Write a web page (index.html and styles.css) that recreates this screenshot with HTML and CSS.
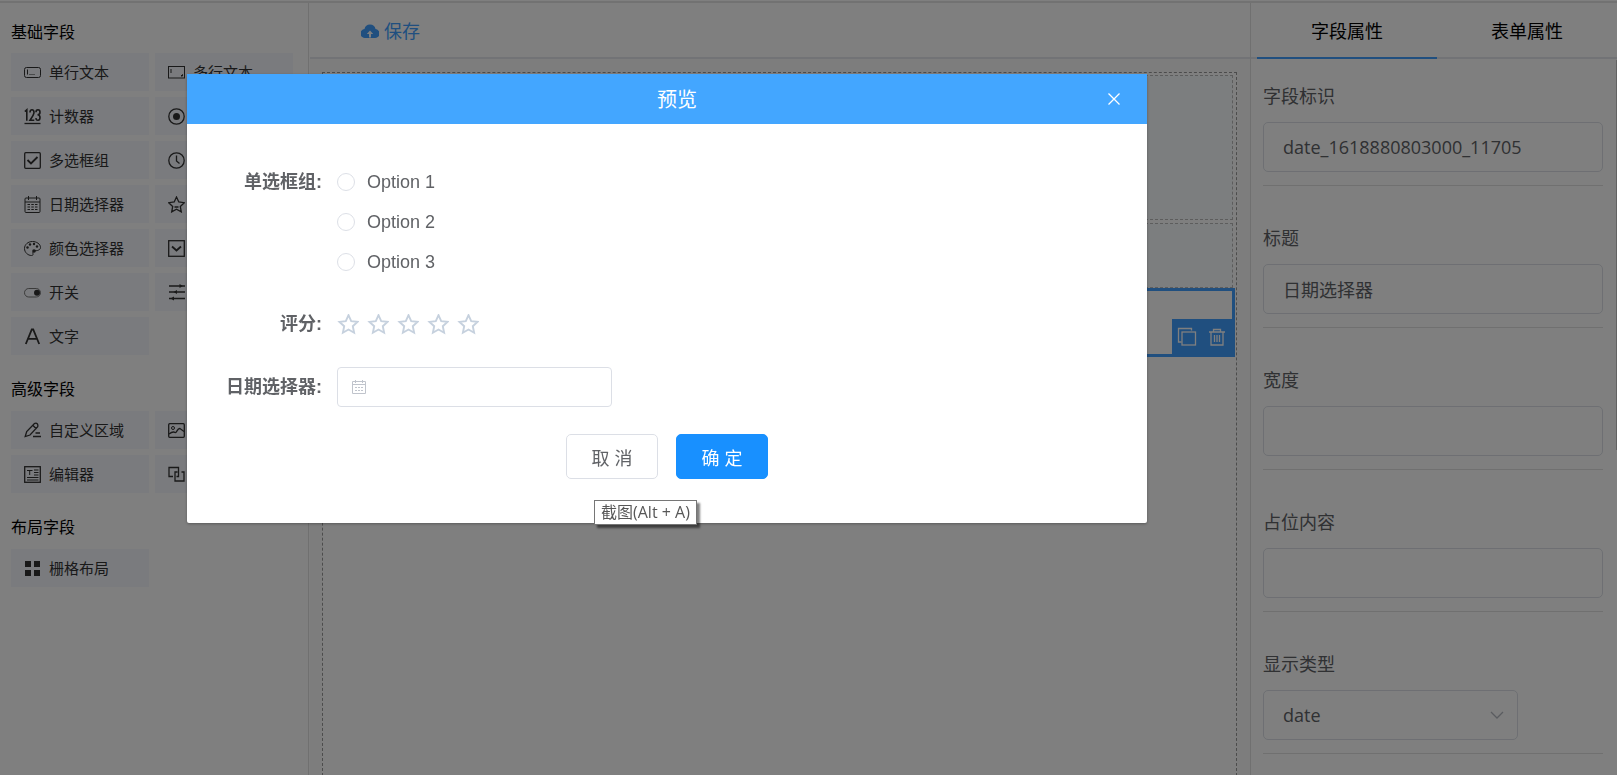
FILE: index.html
```html
<!DOCTYPE html>
<html lang="zh-CN">
<head>
<meta charset="utf-8">
<title>表单设计</title>
<link rel="stylesheet" href="styles.css">
</head>
<body>
<div class="app">
  <aside class="sidebar">
    <h2 class="group-title">基础字段</h2>
    <div class="fields">
      <button class="field"><svg class="icon" viewBox="0 0 17 17"><rect x=".5" y="3.5" width="16" height="10" rx="2"/><path d="M3.5 5.5v5M5.5 10.5h1M7.5 10.5h1M9.5 10.5h1"/></svg>单行文本</button>
      <button class="field"><svg class="icon" viewBox="0 0 17 17"><rect x=".5" y="2.500" width="16" height="11.500"/><path d="M3 5v4M13 12l1.500-1.500v1.500z"/></svg>多行文本</button>
      <button class="field"><svg class="icon" viewBox="0 0 17 17"><path class="digits" d="M.8 3.500L2.800 1.800v11M6 4.500Q6 1.800 8 1.800t2 2.700Q10 6.500 6 12.200h4.300M12 4.300q0-2.500 2-2.500t2 2.500-2.500 2.500q2.500 0 2.500 2.700T14 12.300t-2-2.300"/><path class="bold" d="M.5 15.500h16"/></svg>计数器</button>
      <button class="field"><svg class="icon" viewBox="0 0 17 17"><circle class="bold" cx="8.500" cy="8.500" r="7.700"/><circle class="solid" cx="8.500" cy="8.500" r="3.500"/></svg>单选框组</button>
      <button class="field"><svg class="icon" viewBox="0 0 17 17"><rect class="bold" x=".7" y=".7" width="15.600" height="15.600" rx="1"/><path class="heavy" d="M3.500 8l3.500 3.500L13.500 5"/></svg>多选框组</button>
      <button class="field"><svg class="icon" viewBox="0 0 17 17"><circle class="bold" cx="8.500" cy="8.500" r="7.700"/><path class="bold" d="M8.500 3.500v5.500l3 2.500"/></svg>时间选择器</button>
      <button class="field"><svg class="icon" viewBox="0 0 17 17"><rect x="1" y="2" width="15" height="14.500" rx="1"/><path d="M1 6h15M4.500 0v4M12.500 0v4M3.500 8.500h2.500M7.300 8.500h2.500M11 8.500h2.500M3.500 11h2.500M7.300 11h2.500M11 11h2.500M3.500 13.500h2.500M7.300 13.500h2.500M11 13.500h2.500"/></svg>日期选择器</button>
      <button class="field"><svg class="icon" viewBox="0 0 17 17"><path class="bold" d="M8.500 1l2.300 5 5.500.7-4 3.700 1 5.500-4.800-2.700-4.800 2.700 1-5.500-4-3.700 5.500-.7zM6.500 11h4"/></svg>评分</button>
      <button class="field"><svg class="icon" viewBox="0 0 17 17"><path d="M8.500 1.500C4 1.500.5 4.500.5 8.500s3.500 7 7 7c2.500 0 1-2 1.500-3.500.5-2 3-1 4.500-1.500s3-1.200 3-3c0-3.500-4-6-8-6z"/><circle class="solid" cx="3.500" cy="7.500" r="1.200"/><circle class="solid" cx="6" cy="4.500" r="1.200"/><circle class="solid" cx="10" cy="4" r="1.200"/><circle class="solid" cx="13" cy="6.500" r="1.200"/><circle class="solid" cx="10" cy="11" r="1.800"/></svg>颜色选择器</button>
      <button class="field"><svg class="icon" viewBox="0 0 17 17"><rect class="bold" x=".7" y=".7" width="15.600" height="15.600"/><path class="heavy" d="M4 6.500l4.500 4 4.500-4"/></svg>下拉选择框</button>
      <button class="field"><svg class="icon" viewBox="0 0 17 17"><rect class="thin" x=".5" y="4.500" width="16" height="8.500" rx="4.250"/><circle class="solid" cx="13" cy="8.700" r="3"/></svg>开关</button>
      <button class="field"><svg class="icon" viewBox="0 0 17 17"><path class="bold" d="M1 2h16M1 8h16M1 14.500h16"/><path class="solid" d="M11.500 0l3.500 2-3.500 2zM9 6v4L5.500 8zM6 12.500v4l-3.500-2z"/></svg>滑块</button>
      <button class="field"><svg class="icon" viewBox="0 0 17 17"><path class="heavy" d="M1.800 16L7.800 1.500h1.400L15.200 16M4 10.800h9"/></svg>文字</button>
    </div>
    <h2 class="group-title">高级字段</h2>
    <div class="fields">
      <button class="field"><svg class="icon" viewBox="0 0 17 17"><path class="bold" d="M1.200 14.500l1.500-5 7.500-7.800q2-1 3 0t.5 3L6 13zM9 3.500l3.500 3.500M11.500 11h4.500M9 14.500h8"/></svg>自定义区域</button>
      <button class="field"><svg class="icon" viewBox="0 0 17 17"><rect class="bold" x=".7" y="1.700" width="15.600" height="13.600" rx="1"/><circle cx="5" cy="6" r="1.500"/><path class="bold" d="M1 12q4-3 6-1.500c2 1 2-4.500 5-4l4 3"/></svg>图片</button>
      <button class="field"><svg class="icon" viewBox="0 0 17 17"><rect class="bold" x=".7" y=".7" width="15.600" height="15.600"/><path d="M3 4.500h5.500M5.700 4.500V9M10 4h4.500M10 6.500h4.500M10 9h4.500M3 11.500h11.500M3 14h11.500"/></svg>编辑器</button>
      <button class="field"><svg class="icon" viewBox="0 0 17 17"><path class="bold" d="M5 10.500H1v-9h9.500v9h-2M9.500 6H7v9h9V6h-2.500"/></svg>级联选择器</button>
    </div>
    <h2 class="group-title">布局字段</h2>
    <div class="fields">
      <button class="field"><svg class="icon" viewBox="0 0 17 17"><path class="solid" d="M1 1h6v6H1zM10 1h6v6h-6zM1 10h6v6H1zM10 10h6v6h-6z"/></svg>栅格布局</button>
    </div>
  </aside>

  <main class="main">
    <div class="toolbar">
      <button class="save"><svg class="cloud" viewBox="0 0 18 16"><path d="M4.500 15A4.500 4.500 0 0 1 3.500 6 5.600 5.600 0 0 1 14.500 6a4.500 4.500 0 0 1-1 9z"/><path class="arrow" d="M8 14.500V11H5.800L9 7.500 12.200 11H10v3.500z"/></svg>保存</button>
    </div>
    <div class="stage">
      <div class="canvas">
        <div class="widget widget-radio"></div>
        <div class="widget widget-rate"></div>
        <div class="widget-selected">
          <div class="actions">
            <button class="action" aria-label="复制"><svg viewBox="0 0 20 20"><path d="M4.500 15H1.500V1.500h13v2"/><rect x="5" y="5" width="13.500" height="13"/></svg></button>
            <button class="action" aria-label="删除"><svg viewBox="0 0 20 20"><path d="M2 5h16M6.500 5V2.500h7V5M4 5v13h12V5M7.500 8v7M10 8v7M12.500 8v7"/></svg></button>
          </div>
        </div>
      </div>
    </div>
  </main>

  <section class="config">
    <div class="tabs" role="tablist">
      <button class="tab tab-active" role="tab" aria-selected="true">字段属性</button>
      <button class="tab" role="tab" aria-selected="false">表单属性</button>
    </div>
    <form class="props">
      <div class="prop"><label class="prop-label" for="model">字段标识</label><input class="control" id="model" type="text" value="date_1618880803000_11705"></div>
      <div class="prop"><label class="prop-label" for="name">标题</label><input class="control" id="name" type="text" value="日期选择器"></div>
      <div class="prop"><label class="prop-label" for="width">宽度</label><input class="control" id="width" type="text"></div>
      <div class="prop"><label class="prop-label" for="placeholder">占位内容</label><input class="control" id="placeholder" type="text"></div>
      <div class="prop"><label class="prop-label" for="kind">显示类型</label>
        <div class="select-wrap"><select class="control" id="kind"><option>date</option></select><svg class="chevron" viewBox="0 0 14 8"><path d="M1 1l6 6 6-6"/></svg></div>
      </div>
    </form>
    <div class="scroll-thumb"></div>
  </section>
</div>

<div class="overlay">
  <div class="dialog" role="dialog" aria-labelledby="dialog-title">
    <header class="dialog-head">
      <h1 class="dialog-title" id="dialog-title">预览</h1>
      <button class="close" aria-label="关闭"><svg viewBox="0 0 12 12"><path d="M.5 .5l11 11M11.500 .5l-11 11"/></svg></button>
    </header>
    <form class="preview">
      <div class="row">
        <span class="row-label" id="radio-label">单选框组:</span>
        <div class="radios" role="radiogroup" aria-labelledby="radio-label">
          <label class="radio"><input type="radio" name="option">Option 1</label>
          <label class="radio"><input type="radio" name="option">Option 2</label>
          <label class="radio"><input type="radio" name="option">Option 3</label>
        </div>
      </div>
      <div class="row">
        <span class="row-label">评分:</span>
        <div class="stars">
          <button type="button" class="star" aria-label="1"><svg viewBox="0 0 22 22"><path d="M11.500 1.200l2.700 6 6.300.7-4.700 4.300 1.300 6.500-5.600-3.200-5.600 3.200 1.300-6.500-4.700-4.300 6.300-.7z"/></svg></button>
          <button type="button" class="star" aria-label="2"><svg viewBox="0 0 22 22"><path d="M11.500 1.200l2.700 6 6.300.7-4.700 4.300 1.300 6.500-5.600-3.200-5.600 3.200 1.300-6.500-4.700-4.300 6.300-.7z"/></svg></button>
          <button type="button" class="star" aria-label="3"><svg viewBox="0 0 22 22"><path d="M11.500 1.200l2.700 6 6.300.7-4.700 4.300 1.300 6.500-5.600-3.200-5.600 3.200 1.300-6.500-4.700-4.300 6.300-.7z"/></svg></button>
          <button type="button" class="star" aria-label="4"><svg viewBox="0 0 22 22"><path d="M11.500 1.200l2.700 6 6.300.7-4.700 4.300 1.300 6.500-5.600-3.200-5.600 3.200 1.300-6.500-4.700-4.300 6.300-.7z"/></svg></button>
          <button type="button" class="star" aria-label="5"><svg viewBox="0 0 22 22"><path d="M11.500 1.200l2.700 6 6.300.7-4.700 4.300 1.300 6.500-5.600-3.200-5.600 3.200 1.300-6.500-4.700-4.300 6.300-.7z"/></svg></button>
        </div>
      </div>
      <div class="row">
        <label class="row-label" for="date">日期选择器:</label>
        <div class="date"><svg viewBox="0 0 14 14"><path d="M.5 1.500h13v12H.5zM.5 4.500h13M3.500 0v3M10.500 0v3M3 7.500h2M6 7.500h2M9 7.500h2M3 10.500h2M6 10.500h2M9 10.500h2"/></svg><input id="date" type="text"></div>
      </div>
    </form>
    <footer class="dialog-foot">
      <button class="btn">取 消</button>
      <button class="btn btn-primary">确 定</button>
    </footer>
    <div class="tooltip" role="tooltip">截图(Alt + A)</div>
  </div>
</div>
</body>
</html>
```

FILE: styles.css
```css
* { box-sizing: border-box; }
body { margin: 0; font-family: "Open Sans", "Noto Sans CJK SC", sans-serif; color: #303133; background: #fff; overflow: hidden; }
button { margin: 0; padding: 0; border: 0; background: none; font: inherit; color: inherit; }
h1, h2 { margin: 0; font-weight: 400; }
svg { flex: none; fill: none; }

.app { display: flex; height: 100vh; margin-top: 1px; border-top: 2px solid #e4e4e4; }
.sidebar { width: 309px; flex: none; padding: 0 15px 0 11px; border-right: 1px solid #e0e0e0; }
.group-title { padding: 22px 0 10px; font-size: 16px; line-height: 24px; color: #000; }
.group-title:first-child { padding: 17px 0 9px; }
.fields { display: grid; grid-template-columns: 1fr 1fr; gap: 6px; }
.field { display: flex; align-items: center; gap: 8px; height: 38px; padding-left: 13px; background: #f4f6fc; font-size: 15px; line-height: 24px; color: #333; text-align: left; white-space: nowrap; }
.icon { width: 17px; height: 17px; stroke: #333; stroke-width: 1; }
.icon .thin { stroke: #777; }
.icon .bold { stroke-width: 1.3; }
.icon .digits { stroke-width: 1.6; }
.icon .heavy { stroke-width: 1.8; }
.icon .solid { fill: #333; stroke: none; }

.main { flex: 1; min-width: 0; display: flex; flex-direction: column; padding-left: 1px; }
.toolbar { display: flex; align-items: center; height: 56px; padding: 2px 0 0 51px; border-bottom: 2px solid #e4e7ed; }
.save { display: flex; align-items: center; gap: 5px; font-size: 18px; line-height: 26px; color: #409eff; }
.cloud { width: 18px; height: 16px; fill: #409eff; }
.cloud .arrow { fill: #fff; }
.stage { flex: 1; padding: 13px 13px 0 12px; background: #fafafa; }
.canvas { height: 100%; padding: 2px; border: 1px dashed #999; background: #fff; }
.widget { margin-right: 1px; border: 1px dashed #bbb; background: #f9fcff; }
.widget-radio { height: 145px; margin-bottom: 3px; }
.widget-rate { height: 65px; }
.widget-selected { display: flex; justify-content: flex-end; align-items: flex-end; height: 69px; border: 3px solid #409eff; margin-right: -1px; }
.actions { display: flex; align-items: center; justify-content: center; gap: 10px; width: 60px; height: 35px; background: #409eff; }
.action svg { display: block; width: 20px; height: 20px; stroke: #fff; stroke-width: 1.3; }

.config { position: relative; width: 367px; flex: none; border-left: 1px solid #e0e0e0; }
.tabs { display: flex; height: 56px; padding-left: 6px; border-bottom: 2px solid #e4e7ed; }
.tab { flex: 1; height: 56px; padding-top: 2px; font-size: 18px; line-height: 26px; color: #000; border-bottom: 2px solid transparent; }
.tab-active { border-bottom-color: #409eff; }
.scroll-thumb { position: absolute; top: 57px; right: 0; width: 1px; height: 390px; background: #c4c4c4; }
.props { display: flex; flex-direction: column; gap: 40px; padding: 25px 14px 0 12px; }
.prop { padding-bottom: 13px; border-bottom: 1px solid #e0e0e0; }
.prop-label { display: block; margin-bottom: 14px; font-size: 18px; line-height: 24px; color: #606266; }
.control { display: block; width: 100%; height: 50px; padding: 0 19px; border: 1px solid #dcdfe6; border-radius: 5px; background: #fff; font: inherit; font-size: 18px; color: #606266; appearance: none; }
.select-wrap { position: relative; width: 75%; }
.chevron { position: absolute; right: 14px; top: 21px; width: 14px; height: 8px; stroke: #b4b8c0; stroke-width: 1.3; }

.overlay { position: fixed; inset: 0; background: rgba(0, 0, 0, .5); }
.dialog { position: absolute; left: 187px; top: 74px; width: 960px; background: #fff; border-radius: 2px; box-shadow: 0 1px 3px rgba(0, 0, 0, .3); font-family: "Liberation Sans", "Noto Sans CJK SC", sans-serif; color: #606266; font-size: 18px; }
.dialog-head { display: flex; align-items: center; height: 50px; padding: 0 27px; background: #43a6ff; color: #fff; }
.dialog-title { flex: 1; padding: 2px 0 0 32px; text-align: center; font-size: 20px; line-height: 28px; }
.close svg { display: block; width: 12px; height: 12px; stroke: #fff; stroke-width: 1.3; }
.preview { display: flex; flex-direction: column; gap: 22px; padding: 38px 20px 0; }
.row { display: flex; gap: 15px; line-height: 40px; }
.row-label { width: 115px; flex: none; text-align: right; font-weight: 700; white-space: nowrap; }
.radio { display: flex; align-items: center; gap: 12px; height: 40px; }
.radio input { appearance: none; width: 18px; height: 18px; margin: 0; border: 1px solid #dcdfe6; border-radius: 50%; background: #fff; }
.stars { display: flex; align-items: center; gap: 8px; height: 41px; }
.star svg { display: block; width: 22px; height: 22px; stroke: #c6d1de; stroke-width: 1.9; }
.date { display: flex; align-items: center; gap: 10px; width: 275px; height: 40px; padding: 0 14px; border: 1px solid #dcdfe6; border-radius: 4px; }
.date svg { width: 14px; height: 14px; stroke: #c0c4cc; }
.date input { flex: 1; min-width: 0; border: 0; padding: 0; background: none; font: inherit; }
.dialog-foot { display: flex; justify-content: center; gap: 18px; padding: 27px 0 44px; }
.btn { width: 92px; height: 45px; border: 1px solid #dcdfe6; border-radius: 5px; background: #fff; font-size: 18px; }
.btn-primary { border-color: #1890ff; background: #1890ff; color: #fff; }
.tooltip { position: absolute; left: 407px; bottom: -2px; padding: 0 6px; border: 1px solid #767676; background: #fff; box-shadow: 3px 3px 2px rgba(0, 0, 0, .5); font-family: "Open Sans", "Noto Sans CJK SC", sans-serif; font-size: 16px; line-height: 23px; color: #575757; white-space: nowrap; }
```
